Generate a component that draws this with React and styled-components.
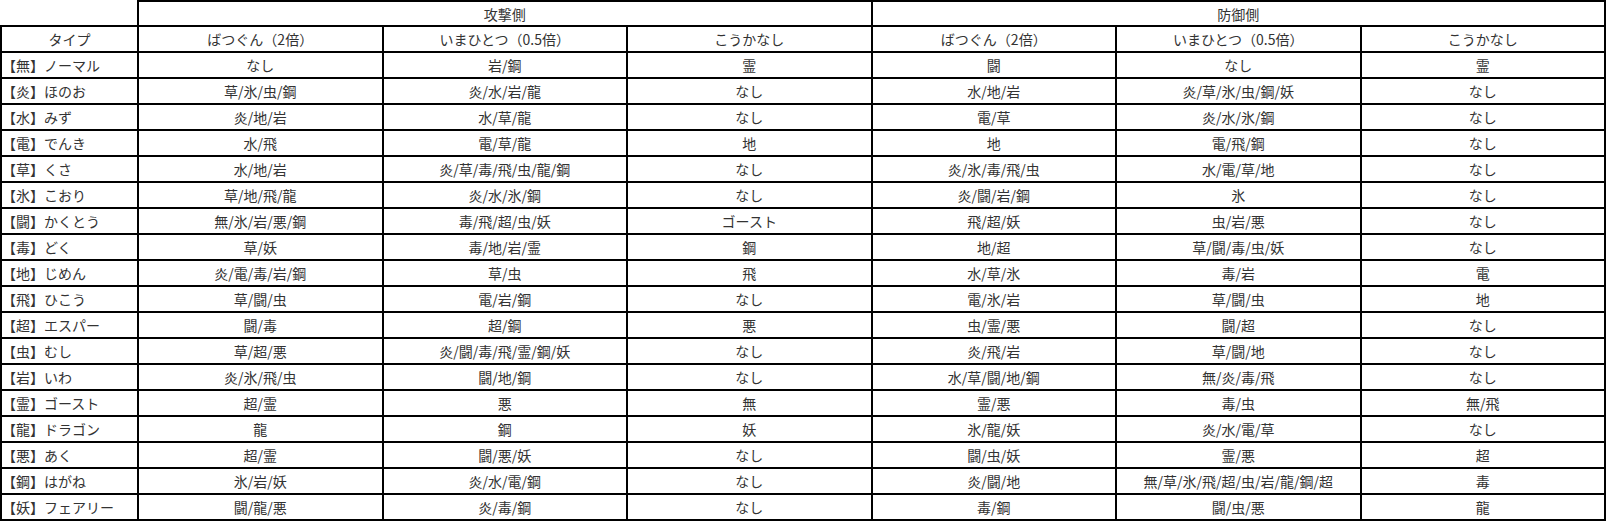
import React from 'react';
import styled, { createGlobalStyle } from 'styled-components';

const GlobalStyle = createGlobalStyle`
  *, *::before, *::after {
    box-sizing: border-box;
  }
  body {
    margin: 0;
    background: #ffffff;
    font-family: "Noto Sans CJK JP", "Noto Sans", sans-serif;
  }
`

const Table = styled.table`
  width: 1606px;
  table-layout: fixed;
  border-collapse: separate;
  border-spacing: 0;
  font-size: 14px;
  color: #333333;
`

const Cell = styled.td`
  height: ${props => props.first ? '27px' : '26px'};
  padding: 0;
  text-align: ${props => props.left ? 'left' : 'center'};
  padding-left: ${props => props.left ? '0px' : '0'};
  vertical-align: middle;
  font-weight: 400;
  line-height: 20px;
  white-space: nowrap;
  border-right: 2px solid #000;
  border-bottom: 2px solid #000;
  border-top: ${props => props.first && !props.blank ? '2px solid #000' : 'none'};
  border-left: ${props => props.left && !props.blank ? '2px solid #000' : 'none'};
`

const rows = [
  ['【無】ノーマル', 'なし', '岩/鋼', '霊', '闘', 'なし', '霊'],
  ['【炎】ほのお', '草/氷/虫/鋼', '炎/水/岩/龍', 'なし', '水/地/岩', '炎/草/氷/虫/鋼/妖', 'なし'],
  ['【水】みず', '炎/地/岩', '水/草/龍', 'なし', '電/草', '炎/水/氷/鋼', 'なし'],
  ['【電】でんき', '水/飛', '電/草/龍', '地', '地', '電/飛/鋼', 'なし'],
  ['【草】くさ', '水/地/岩', '炎/草/毒/飛/虫/龍/鋼', 'なし', '炎/氷/毒/飛/虫', '水/電/草/地', 'なし'],
  ['【氷】こおり', '草/地/飛/龍', '炎/水/氷/鋼', 'なし', '炎/闘/岩/鋼', '氷', 'なし'],
  ['【闘】かくとう', '無/氷/岩/悪/鋼', '毒/飛/超/虫/妖', 'ゴースト', '飛/超/妖', '虫/岩/悪', 'なし'],
  ['【毒】どく', '草/妖', '毒/地/岩/霊', '鋼', '地/超', '草/闘/毒/虫/妖', 'なし'],
  ['【地】じめん', '炎/電/毒/岩/鋼', '草/虫', '飛', '水/草/氷', '毒/岩', '電'],
  ['【飛】ひこう', '草/闘/虫', '電/岩/鋼', 'なし', '電/氷/岩', '草/闘/虫', '地'],
  ['【超】エスパー', '闘/毒', '超/鋼', '悪', '虫/霊/悪', '闘/超', 'なし'],
  ['【虫】むし', '草/超/悪', '炎/闘/毒/飛/霊/鋼/妖', 'なし', '炎/飛/岩', '草/闘/地', 'なし'],
  ['【岩】いわ', '炎/氷/飛/虫', '闘/地/鋼', 'なし', '水/草/闘/地/鋼', '無/炎/毒/飛', 'なし'],
  ['【霊】ゴースト', '超/霊', '悪', '無', '霊/悪', '毒/虫', '無/飛'],
  ['【龍】ドラゴン', '龍', '鋼', '妖', '氷/龍/妖', '炎/水/電/草', 'なし'],
  ['【悪】あく', '超/霊', '闘/悪/妖', 'なし', '闘/虫/妖', '霊/悪', '超'],
  ['【鋼】はがね', '氷/岩/妖', '炎/水/電/鋼', 'なし', '炎/闘/地', '無/草/氷/飛/超/虫/岩/龍/鋼/超', '毒'],
  ['【妖】フェアリー', '闘/龍/悪', '炎/毒/鋼', 'なし', '毒/鋼', '闘/虫/悪', '龍'],
]

const subHeads = ['ばつぐん（2倍）', 'いまひとつ（0.5倍）', 'こうかなし']

export default function App() {
  return (
    <>
      <GlobalStyle />
      <Table>
        <colgroup>
          <col style={{ width: '139px' }} />
          {[0, 1, 2, 3, 4, 5].map(i => <col key={i} />)}
        </colgroup>
        <tbody>
          <tr>
            <Cell first left blank></Cell>
            <Cell first colSpan={3}>攻撃側</Cell>
            <Cell first colSpan={3}>防御側</Cell>
          </tr>
          <tr>
            <Cell left style={{ textAlign: 'center' }}>タイプ</Cell>
            {[...subHeads, ...subHeads].map((h, i) => <Cell key={i}>{h}</Cell>)}
          </tr>
          {rows.map((r, i) => (
            <tr key={i}>
              {r.map((v, j) => (
                <Cell key={j} left={j === 0}>{v}</Cell>
              ))}
            </tr>
          ))}
        </tbody>
      </Table>
    </>
  )
}
